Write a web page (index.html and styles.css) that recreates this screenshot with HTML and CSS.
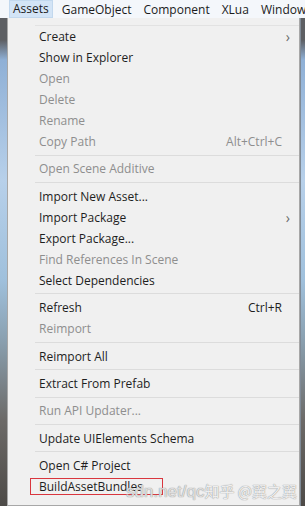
FILE: index.html
```html
<!DOCTYPE html>
<html>
<head>
<meta charset="utf-8">
<link rel="stylesheet" href="styles.css">
</head>
<body>
<div class="menubar">
  <span class="mb-item active">Assets</span>
  <span class="mb-item">GameObject</span>
  <span class="mb-item">Component</span>
  <span class="mb-item">XLua</span>
  <span class="mb-item">Window</span>
</div>
<div class="stage">
  <div class="menu">
    <div class="topline"></div>
    <div class="item"><span>Create</span><span class="arrow">&#8250;</span></div>
    <div class="item"><span>Show in Explorer</span></div>
    <div class="item dis"><span>Open</span></div>
    <div class="item dis"><span>Delete</span></div>
    <div class="item dis"><span>Rename</span></div>
    <div class="item dis"><span>Copy Path</span><span class="key">Alt+Ctrl+C</span></div>
    <div class="sep"></div>
    <div class="item dis"><span>Open Scene Additive</span></div>
    <div class="sep"></div>
    <div class="item"><span>Import New Asset...</span></div>
    <div class="item"><span>Import Package</span><span class="arrow">&#8250;</span></div>
    <div class="item"><span>Export Package...</span></div>
    <div class="item dis"><span>Find References In Scene</span></div>
    <div class="item"><span>Select Dependencies</span></div>
    <div class="sep"></div>
    <div class="item"><span>Refresh</span><span class="key">Ctrl+R</span></div>
    <div class="item dis"><span>Reimport</span></div>
    <div class="sep"></div>
    <div class="item"><span>Reimport All</span></div>
    <div class="sep"></div>
    <div class="item"><span>Extract From Prefab</span></div>
    <div class="sep"></div>
    <div class="item dis"><span>Run API Updater...</span></div>
    <div class="sep"></div>
    <div class="item"><span>Update UIElements Schema</span></div>
    <div class="sep"></div>
    <div class="item"><span>Open C# Project</span></div>
    <div class="item"><span class="boxed">BuildAssetBundles</span></div>
    <div class="watermark"><span class="wm-url">sdn.net/qc</span><span class="wm-cn">知乎 @翼之翼</span></div>
  </div>
</div>
</body>
</html>
```
FILE: styles.css
```css
html, body {
  margin: 0;
  padding: 0;
}
body {
  width: 305px;
  height: 506px;
  overflow: hidden;
  font-family: "Open Sans", "Noto Sans CJK SC", sans-serif;
  background: linear-gradient(180deg, #5d5f63 0px, #5d5f63 40px, #8fb0d6 60px, #b7d0ea 180px, #9fc0dc 280px, #8aa0b0 340px, #6c6a68 420px, #4d4a47 506px);
}
.menubar {
  height: 18px;
  background: #f4f7fb;
  display: flex;
  align-items: center;
  padding-left: 9px;
  gap: 6px;
  font-size: 12px;
  color: #1b1b1b;
  white-space: nowrap;
  overflow: hidden;
}
.mb-item {
  padding: 0 3px;
  line-height: 17px;
}
.mb-item.active {
  background: #d3e4f6;
  border: 1px solid #c2d8ee;
  line-height: 16px;
}
.stage {
  padding: 0 5px 0 7px;
  height: 488px;
  display: flex;
}
.menu {
  position: relative;
  flex: 1;
  background: #f0f0f0;
  border: 1px solid #a7a7a7;
  border-top: none;
  padding-top: 7px;
  font-size: 12px;
  color: #1e1e1e;
  box-shadow: 1px 0 0 #7f8a96;
  overflow: hidden;
}
.topline {
  height: 1px;
  background: #e2e2e2;
  margin: 0 0 0 27px;
}
.item {
  height: 21px;
  display: flex;
  align-items: center;
  padding: 0 17px 0 31px;
  position: relative;
  white-space: nowrap;
}
.item > span:first-child {
  flex: 1;
}
.item.dis {
  color: #8e8e8e;
}
.item.dis .key {
  color: #8e8e8e;
}
.arrow {
  position: absolute;
  right: 9px;
  top: 1px;
  font-size: 14px;
  color: #6a6a6a;
}
.sep {
  height: 1px;
  background: #dcdcdc;
  margin: 2.7px 0 2.7px 27px;
}
.boxed {
  flex: none !important;
  outline: 1px solid #d9363e;
  padding: 0 19px 0 8px;
  margin-left: -8px;
  line-height: 15px;
}
.watermark {
  position: absolute;
  left: 118px;
  bottom: 3px;
  display: flex;
  align-items: baseline;
  gap: 0;
  color: rgba(250, 250, 250, 0.9);
  text-shadow: 0 0 1px #9a9a9a, 0 0 1px #9a9a9a;
  white-space: nowrap;
  pointer-events: none;
}
.wm-url {
  font-family: "Liberation Sans", sans-serif;
  font-size: 17px;
  color: rgba(240, 240, 240, 0.8);
}
.wm-cn {
  font-family: "Noto Sans CJK SC", sans-serif;
  font-size: 15px;
}
```
